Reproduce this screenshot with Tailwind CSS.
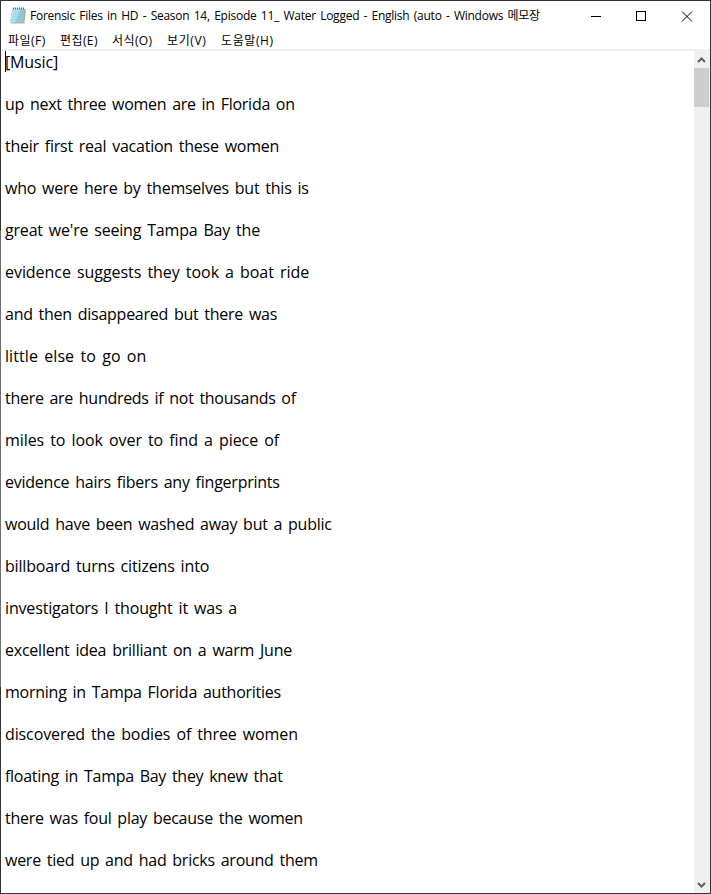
<!DOCTYPE html>
<html lang="ko">

<head>
    <meta charset="UTF-8">
    <meta name="viewport" content="width=device-width, initial-scale=1.0">
    <title>Windows 메모장</title>
    <script src="https://cdn.jsdelivr.net/npm/@tailwindcss/browser@4"></script>
</head>

<body class="bg-white text-black font-['Open_Sans','Noto_Sans_CJK_KR',sans-serif]">
    <div class="relative w-[711px] h-[894px] border border-[#333] flex flex-col">
        <!-- Lighter stretch of the window edge -->
        <div class="absolute -left-px top-[229px] w-px h-[457px] bg-[#6e6e6e]"></div>

        <!-- Title bar -->
        <header class="h-[29px] shrink-0 flex items-center pl-[9px]">
            <svg width="16" height="17" viewBox="0 0 16 17" class="shrink-0">
                <path d="M4 2h12l-1.500 14.500H1z" fill="#b9ae94" />
                <path d="M2.500 1.500h12L13 15.500H0z" fill="#8fcbdc" />
                <path d="M2.500 2h8L5 15.500H0z" fill="#b9e3ec" />
                <path d="M3 5h10M2.500 7.500h10M2 10h10M1.500 12.500h10" stroke="#7fbfd0" stroke-width=".5" />
                <path d="M3 1.500h12" stroke="#5d7378" stroke-width="2" stroke-dasharray="1 1" />
            </svg>
            <h1 class="ml-1 text-xs whitespace-nowrap [word-spacing:1.5px] tracking-[-0.255px]">Forensic Files in HD - Season 14, Episode 11_ Water Logged - English (auto - Windows 메모장</h1>
            <div class="ml-auto flex">
                <svg width="46" height="28" shape-rendering="crispEdges">
                    <path d="M19 14.500h10" stroke="#000" />
                </svg>
                <svg width="46" height="28" shape-rendering="crispEdges">
                    <path d="M18.500 9.500h9v9h-9z" fill="none" stroke="#000" />
                </svg>
                <svg width="46" height="28">
                    <path d="M18 9.500l10 10M28 9.500l-10 10" stroke="#000" />
                </svg>
            </div>
        </header>

        <!-- Menu -->
        <nav class="h-[20px] -mb-px pt-px shrink-0 flex items-center gap-[14px] pl-[7px] text-xs whitespace-nowrap">
            <span class="w-[38px] tracking-[0.5px]">파일(F)</span>
            <span class="w-[38px] tracking-[0.4px]">편집(E)</span>
            <span class="w-[41px] tracking-[0.4px]">서식(O)</span>
            <span class="w-[40px] tracking-[0.6px]">보기(V)</span>
            <span class="w-[54px] tracking-[0.6px]">도움말(H)</span>
        </nav>

        <!-- Editor -->
        <main class="flex-1 min-h-0 flex border-t-2 border-[#f0f0f0]">
            <div class="relative flex-1 pl-1 pt-px text-base leading-[21px] whitespace-nowrap overflow-hidden">
                <div class="absolute left-1 top-0 w-px h-[21px] bg-black"></div>
                <div class="flex flex-col gap-[21px] [word-spacing:2px]">
                    <p class="tracking-[-0.14px]">[Music]</p>
                    <p class="tracking-[-0.28px]">up next three women are in Florida on</p>
                    <p class="tracking-[-0.24px]">their first real vacation these women</p>
                    <p class="tracking-[-0.23px]">who were here by themselves but this is</p>
                    <p class="tracking-[-0.19px]">great we're seeing Tampa Bay the</p>
                    <p class="tracking-[-0.05px]">evidence suggests they took a boat ride</p>
                    <p class="tracking-[-0.26px]">and then disappeared but there was</p>
                    <p class="tracking-[0.08px]">little else to go on</p>
                    <p class="tracking-[-0.29px]">there are hundreds if not thousands of</p>
                    <p class="tracking-[-0.07px]">miles to look over to find a piece of</p>
                    <p class="tracking-[-0.24px]">evidence hairs fibers any fingerprints</p>
                    <p class="tracking-[-0.26px]">would have been washed away but a public</p>
                    <p class="tracking-[-0.17px]">billboard turns citizens into</p>
                    <p class="tracking-[-0.16px]">investigators I thought it was a</p>
                    <p class="tracking-[-0.23px]">excellent idea brilliant on a warm June</p>
                    <p class="tracking-[-0.25px]">morning in Tampa Florida authorities</p>
                    <p class="tracking-[-0.11px]">discovered the bodies of three women</p>
                    <p class="tracking-[-0.28px]">floating in Tampa Bay they knew that</p>
                    <p class="tracking-[-0.26px]">there was foul play because the women</p>
                    <p class="tracking-[-0.26px]">were tied up and had bricks around them</p>
                </div>
            </div>
            <!-- Scrollbar -->
            <div class="w-4 shrink-0 bg-[#f0f0f0] flex flex-col">
                <svg width="15" height="17">
                    <path d="M4 11l3.500-3.500L11 11" fill="none" stroke="#606060" stroke-width="2" />
                </svg>
                <div class="w-[15px] h-[39px] bg-[#cdcdcd]"></div>
                <svg width="15" height="17" class="mt-auto">
                    <path d="M4 7l3.500 3.500L11 7" fill="none" stroke="#606060" stroke-width="2" />
                </svg>
            </div>
        </main>
    </div>
</body>

</html>
